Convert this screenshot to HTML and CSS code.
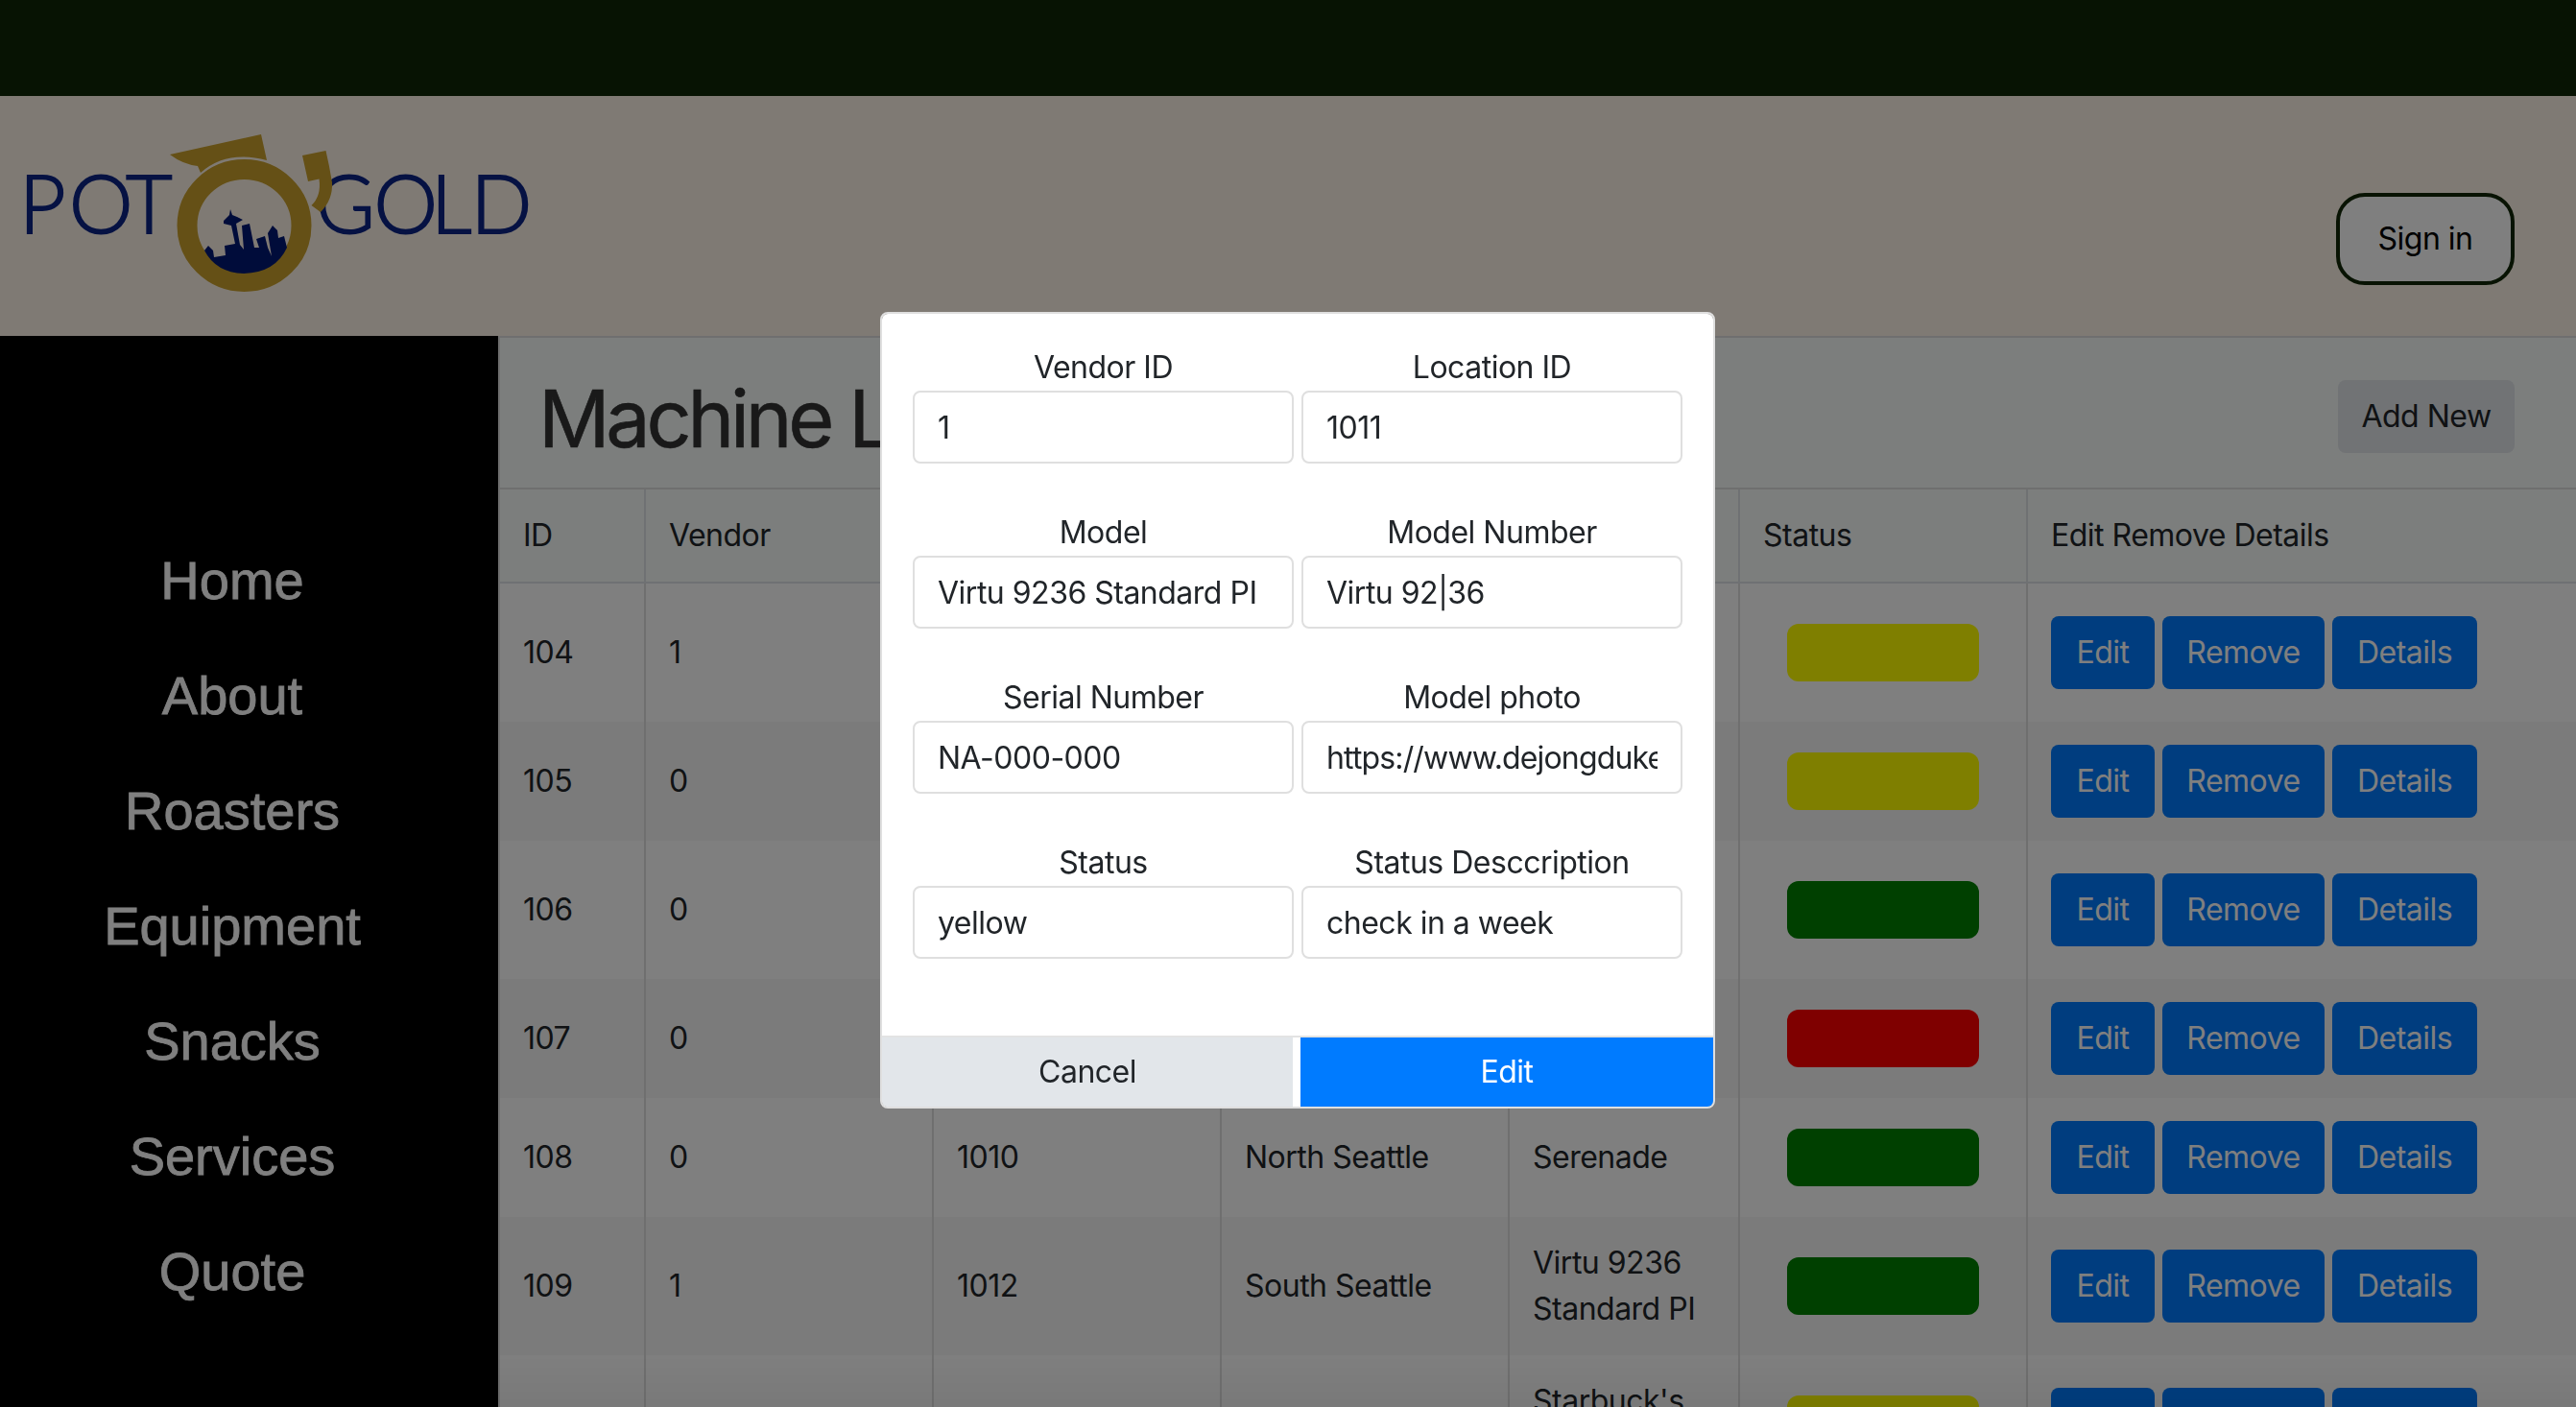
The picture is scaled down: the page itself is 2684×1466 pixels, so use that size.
FILE: index.html
```
<!DOCTYPE html>
<html lang="en">
<head>
<meta charset="utf-8">
<title>Machine List</title>
<link rel="stylesheet" href="styles.css">
</head>
<body>
<div class="topbar"></div>
<header class="header">
  <svg class="logo" width="540" height="180" viewBox="20 130 540 180" role="img" aria-label="Pot O'Gold">
    <g class="logo-text">
      <text y="243" x="20 72 131">POT</text>
      <text y="243" x="329 389.5 449 490.500">GOLD</text>
    </g>
    <g class="logo-gold">
      <ellipse class="logo-ring" cx="254.5" cy="235" rx="59.5" ry="58.500"/>
      <path d="M177 161 L272 140 L278 167 Q236 156 209 180 L206 173 Q190 171 177 161Z"/>
      <path d="M315 162 L339.500 157 Q343 172 346 190 Q347 208 334 221 L324.500 214 Q335 204 332.500 186.500 L321 189Z"/>
    </g>
    <path class="logo-city" d="M213 261 L217 256 L222 261 L223 268 L235 266 L234 256 L245 254 L241 235 L233 233 L233 230 L239 224 L240 218 L242 224 L247 226 L253 229 L246 233 L250 255 L254 260 L252 235 L260 233 L265 258 L270 258 L267 249 L276 246 L279 258 L283 267 L279 243 L284 235 L289 240 L290 248 L296 246 L299 258 Q287 284 254 285 Q225 284 213 261Z"/>
  </svg>
  <button class="sign-in">Sign in</button>
</header>
<div class="layout">
  <nav class="sidebar">
    <a>Home</a><a>About</a><a>Roasters</a><a>Equipment</a><a>Snacks</a><a>Services</a><a>Quote</a>
  </nav>
  <main class="machines">
    <div class="title-row"><h1>Machine List</h1><button class="btn btn-light">Add New</button></div>
    <table>
      <colgroup><col class="c-id"><col class="c-m"><col class="c-m"><col class="c-m"><col class="c-s"><col class="c-m"><col></colgroup>
      <thead><tr><th>ID</th><th>Vendor</th><th></th><th></th><th></th><th>Status</th><th>Edit Remove Details</th></tr></thead>
      <tbody>
        <tr class="tall"><td>104</td><td>1</td><td></td><td></td><td></td><td><div class="pill yellow"></div></td><td><div class="actions"><button class="btn">Edit</button><button class="btn">Remove</button><button class="btn">Details</button></div></td></tr>
        <tr><td>105</td><td>0</td><td></td><td></td><td></td><td><div class="pill yellow"></div></td><td><div class="actions"><button class="btn">Edit</button><button class="btn">Remove</button><button class="btn">Details</button></div></td></tr>
        <tr class="tall"><td>106</td><td>0</td><td></td><td></td><td></td><td><div class="pill green"></div></td><td><div class="actions"><button class="btn">Edit</button><button class="btn">Remove</button><button class="btn">Details</button></div></td></tr>
        <tr><td>107</td><td>0</td><td></td><td></td><td></td><td><div class="pill red"></div></td><td><div class="actions"><button class="btn">Edit</button><button class="btn">Remove</button><button class="btn">Details</button></div></td></tr>
        <tr><td>108</td><td>0</td><td>1010</td><td>North Seattle</td><td>Serenade</td><td><div class="pill green"></div></td><td><div class="actions"><button class="btn">Edit</button><button class="btn">Remove</button><button class="btn">Details</button></div></td></tr>
        <tr class="tall"><td>109</td><td>1</td><td>1012</td><td>South Seattle</td><td>Virtu 9236<br>Standard PI</td><td><div class="pill green"></div></td><td><div class="actions"><button class="btn">Edit</button><button class="btn">Remove</button><button class="btn">Details</button></div></td></tr>
        <tr class="tall"><td></td><td></td><td></td><td></td><td>Starbuck's<br>&nbsp;</td><td><div class="pill yellow"></div></td><td><div class="actions"><button class="btn" aria-label="Edit"></button><button class="btn" aria-label="Remove"></button><button class="btn" aria-label="Details"></button></div></td></tr>
      </tbody>
    </table>
  </main>
</div>
<div class="overlay">
  <form class="modal">
    <div class="fields">
      <label>Vendor ID<input value="1"></label>
      <label>Location ID<input value="1011"></label>
      <label>Model<input value="Virtu 9236 Standard PI"></label>
      <label>Model Number<input value="Virtu 92|36"></label>
      <label>Serial Number<input value="NA-000-000"></label>
      <label>Model photo<input class="url" value="https://www.dejongduke"></label>
      <label>Status<input value="yellow"></label>
      <label>Status Desccription<input value="check in a week"></label>
    </div>
    <div class="modal-footer"><button type="button" class="cancel">Cancel</button><button type="button" class="submit">Edit</button></div>
  </form>
</div>
</body>
</html>
```
FILE: styles.css
```
* { box-sizing: border-box; }
html, body { height: 100%; }
body {
  margin: 0;
  overflow: hidden;
  background: #fff;
  color: #212529;
  font: 400 32px/48px Inter, "Liberation Sans", sans-serif;
  letter-spacing: -.5px;
}
button, input { font: inherit; color: inherit; letter-spacing: inherit; }
button { border: 0; margin: 0; }

.topbar { height: 100px; background: #0e2606; }
.header {
  height: 250px;
  padding: 30px 64px 0 20px;
  display: flex;
  justify-content: space-between;
  align-items: flex-start;
  background: #fff5e8;
}
.logo { display: block; }
.logo-text {
  font: 300 84px Lato, sans-serif;
  letter-spacing: 0;
  fill: #0c2486;
  stroke: #0c2486;
  stroke-width: 1.8;
}
.logo-gold { fill: #caa02c; }
.logo-ring { fill: none; stroke: #caa02c; stroke-width: 21; }
.logo-city { fill: #001874; }
.sign-in {
  width: 186px;
  height: 96px;
  margin-top: 71px;
  padding: 0;
  border: 4px solid #102606;
  border-radius: 30px;
  background: #fff;
  color: #000;
}

.layout { display: flex; height: 1116px; }
.sidebar {
  flex: 0 0 519px;
  padding: 195px 35px 0 0;
  display: flex;
  flex-direction: column;
  align-items: center;
  background: #000;
  color: #fff;
  font: 56px/120px "Liberation Sans", Arial, sans-serif;
  letter-spacing: 0;
  -webkit-text-stroke: .8px #fff;
}
.sidebar a { height: 120px; }

.machines { flex: 1; min-width: 0; border: 2px solid #dfdfdf; border-width: 2px 0 0 2px; overflow: hidden; }
.title-row {
  height: 158px;
  padding: 0 64px 0 40px;
  display: flex;
  justify-content: space-between;
  align-items: center;
  background: #f8fcfa;
  border-bottom: 2px solid #dfdfdf;
}
h1 {
  margin: 12px 0 0;
  font-size: 82.5px;
  font-weight: 400;
  line-height: 98px;
  letter-spacing: -4.2px;
  color: #333;
  -webkit-text-stroke: .6px #333;
}
.btn {
  height: 76px;
  padding: 0 26px;
  border-radius: 8px;
  background: #007bff;
  color: #fff;
}
.btn-light { width: 184px; padding: 0; background: #e2e6ea; color: #212529; margin-top: 8px; }

table { width: 100%; table-layout: fixed; border-collapse: separate; border-spacing: 0; }
.c-id { width: 152px; }
.c-m { width: 300px; }
.c-s { width: 240px; }
th, td { padding: 0 24px; text-align: left; font-weight: 400; border-right: 2px solid #dfdfdf; }
th { height: 98px; background: #f8fcfa; border-right-color: #dee2e6; border-bottom: 2px solid #dee2e6; }
td { height: 124px; }
.tall td { height: 144px; }
th:last-child, td:last-child { border-right: 0; }
tbody tr:nth-child(even) { background: #f7f7f7; }
.pill { width: 200px; height: 60px; margin: 0 auto; border-radius: 12px; }
.yellow { background: #ff0; }
.green { background: green; }
.red { background: red; }
.actions { display: flex; gap: 8px; }
.actions .btn { padding: 0; }
.actions .btn:nth-child(1) { width: 108px; }
.actions .btn:nth-child(2) { width: 169px; }
.actions .btn:nth-child(3) { width: 151px; }

.overlay {
  position: fixed;
  inset: 0;
  background: linear-gradient(rgba(0, 0, 0, 0), rgba(0, 0, 0, .05)) bottom / 100% 54px no-repeat, rgba(0, 0, 0, .5);
}
.modal {
  width: 870px;
  height: 830px;
  margin: 325px 0 0 917px;
  display: flex;
  flex-direction: column;
  background: #fff;
  background-clip: padding-box;
  border: 2px solid #dfdfdf;
  border-radius: 8px;
  overflow: hidden;
}
.fields {
  flex: 1;
  padding: 32px 32px 0;
  display: grid;
  grid-template-columns: 397px 397px;
  grid-auto-rows: 124px;
  gap: 48px 8px;
}
label { display: block; text-align: center; }
input {
  display: block;
  width: 100%;
  height: 76px;
  padding: 0 24px;
  border: 2px solid #dfdfdf;
  border-radius: 8px;
  background: #fff;
  text-align: left;
  outline: 0;
}
.url { letter-spacing: -.85px; }
.modal-footer {
  height: 74px;
  display: grid;
  grid-template-columns: 428px 430px;
  gap: 8px;
  border-top: 2px solid #e3e3e3;
}
.cancel { background: #e2e6ea; }
.submit { background: #007bff; color: #fff; }
```
